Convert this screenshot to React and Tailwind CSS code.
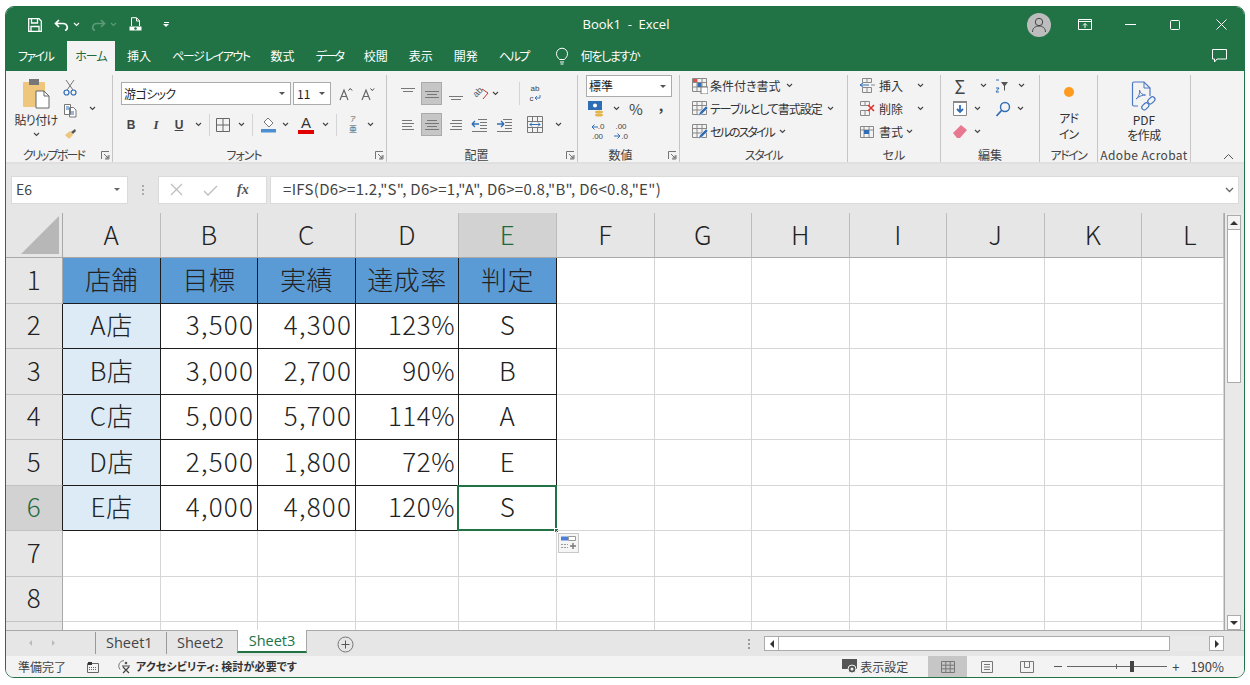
import { Fragment } from "react";

const cols = ["A", "B", "C", "D", "E", "F", "G", "H", "I", "J", "K", "L"];
const table = [
  ["店舗", "目標", "実績", "達成率", "判定"],
  ["A店", "3,500", "4,300", "123%", "S"],
  ["B店", "3,000", "2,700", "90%", "B"],
  ["C店", "5,000", "5,700", "114%", "A"],
  ["D店", "2,500", "1,800", "72%", "E"],
  ["E店", "4,000", "4,800", "120%", "S"],
];

function Ic({ w = 16, h = 16, children }) {
  return (
    <svg width={w} height={h} viewBox={`0 0 ${w} ${h}`} fill="none" className="shrink-0">
      {children}
    </svg>
  );
}

function Chev({ color = "#444" }) {
  return (
    <svg width="7" height="5" viewBox="0 0 7 5" fill="none" className="shrink-0">
      <path d="M1 1l2.5 2.5L6 1" stroke={color} strokeWidth="1.1" />
    </svg>
  );
}

function Launcher() {
  return (
    <svg width="9" height="9" viewBox="0 0 9 9" fill="none" className="shrink-0">
      <path d="M.5 8V.5H8M8 4v4H4M3 3l4 4M7 4.5V7H4.5" stroke="#666" strokeWidth=".9" />
    </svg>
  );
}

function Lines({ rows, y = 0 }) {
  return (
    <Ic w={16} h={16}>
      {rows.map((r, i) => (
        <path key={i} d={`M${r[0]} ${y + i * 3 + 0.5}H${r[1]}`} stroke="#777" />
      ))}
    </Ic>
  );
}

function Group({ width, label, launcher, children }) {
  return (
    <div className={`flex flex-col h-[87px] border-r border-[#c6c6c6] shrink-0 ${width}`}>
      <div className="h-[73px]">{children}</div>
      <div className="flex items-center h-[14px]">
        <div className="flex-1 text-center text-[12px] leading-none text-[#444] whitespace-nowrap">{label}</div>
        {launcher && (
          <div className="mr-[2px]">
            <Launcher />
          </div>
        )}
      </div>
    </div>
  );
}

function Clipboard() {
  return (
    <Group width="w-[107px]" label={<span className="tracking-[-1.8px]">クリップボード</span>} launcher>
      <div className="flex">
        <div className="flex flex-col items-center w-[52px] ml-[4px] pt-[4px]">
          <Ic w={29} h={30}>
            <rect x="1" y="3" width="22" height="25" rx="1" fill="#eec77c" />
            <rect x="7" y="0" width="10" height="6" fill="#777" />
            <path d="M14 12h8l5 5v12H14z" fill="#fff" stroke="#666" />
            <path d="M22 12v5h5" stroke="#666" />
          </Ic>
          <div className="text-[12px] leading-none mt-[5px] tracking-[-0.7px] text-[#333] whitespace-nowrap">貼り付け</div>
          <div className="mt-[6px]">
            <Chev />
          </div>
        </div>
        <div className="flex flex-col items-center w-[16px] pt-[1px]">
          <div className="h-[23px] flex items-center">
            <Ic w={14} h={17}>
              <path d="M3 1l7 10M11 1L4 11" stroke="#777" />
              <circle cx="3.5" cy="13.5" r="2.5" stroke="#2f6db5" strokeWidth="1.2" />
              <circle cx="10.5" cy="13.5" r="2.5" stroke="#2f6db5" strokeWidth="1.2" />
            </Ic>
          </div>
          <div className="h-[23px] flex items-center">
            <Ic w={15} h={15}>
              <path d="M1.5 1.5h6v10h-6zM6.5 4.5h4l2.500 2.500v7h-6.500z" fill="#fff" stroke="#777" />
              <path d="M3 4h3M3 6h3M8 9h3M8 11h3" stroke="#2f6db5" />
            </Ic>
          </div>
          <div className="h-[23px] flex items-center">
            <Ic w={15} h={15}>
              <path d="M2 9l5-4 3 4-4 4z" fill="#eec77c" />
              <path d="M8 6l4-3 1 2-3 3z" fill="#555" />
            </Ic>
          </div>
        </div>
        <div className="ml-[11px] pt-[31px]">
          <Chev />
        </div>
      </div>
    </Group>
  );
}

function Font() {
  return (
    <Group width="w-[274px]" label={<span className="tracking-[-1px]">フォント</span>} launcher>
      <div className="pl-[8px] pt-[7px]">
        <div className="flex items-center h-[23px]">
          <div className="flex items-center justify-between w-[170px] h-[23px] border border-[#ababab] bg-white px-[2px] pr-[5px] text-[12px] text-[#222]">
            <span className="tracking-[-0.6px]">游ゴシック</span>
            <span className="w-0 h-0 border-x-[3px] border-x-transparent border-t-[3px] border-t-[#555]" />
          </div>
          <div className="flex items-center justify-between w-[38px] h-[23px] ml-[2px] border border-[#ababab] bg-white px-[3px] pr-[5px] text-[12px] text-[#222]">
            <span>11</span>
            <span className="w-0 h-0 border-x-[3px] border-x-transparent border-t-[3px] border-t-[#555]" />
          </div>
          <div className="ml-[4px] w-[22px] flex justify-center">
            <Ic w={14} h={14}>
              <path d="M1 13L5 3l4 10M2.500 9.500h5" stroke="#666" strokeWidth="1.200" />
              <path d="M9.500 3.500l1.800-2 1.800 2" stroke="#444" />
            </Ic>
          </div>
          <div className="w-[22px] flex justify-center">
            <Ic w={14} h={14}>
              <path d="M1 13L5 3l4 10M2.500 9.500h5" stroke="#666" strokeWidth="1.200" />
              <path d="M9.500 1.500l1.800 2 1.800-2" stroke="#444" />
            </Ic>
          </div>
        </div>
        <div className="flex items-center h-[23px] mt-[8px] text-[#444]">
          <div className="w-[20px] text-center text-[12px] font-bold font-['Liberation_Sans',sans-serif]">B</div>
          <div className="w-[30px] text-center text-[13px] font-bold italic font-['Liberation_Serif',serif]">I</div>
          <div className="w-[16px] text-center text-[12px] font-bold underline font-['Liberation_Sans',sans-serif]">U</div>
          <div className="w-[22px] flex justify-center"><Chev /></div>
          <div className="w-[1px] h-[22px] bg-[#d4d4d4]" />
          <div className="w-[25px] flex justify-center">
            <Ic w={14} h={14}>
              <path d="M.5.500h13v13H.5zM7 1v12M1 7h12" stroke="#666" />
            </Ic>
          </div>
          <div className="w-[12px] flex justify-center"><Chev /></div>
          <div className="w-[10px] flex justify-center"><div className="w-[1px] h-[22px] bg-[#d4d4d4]" /></div>
          <div className="w-[22px] flex justify-center">
            <Ic w={16} h={16}>
              <path d="M8 1l5 5-4 4-5-5z" fill="#fff" stroke="#777" />
              <path d="M1 12h15v3.500H1z" fill="#4d8fd0" />
            </Ic>
          </div>
          <div className="w-[12px] flex justify-center"><Chev /></div>
          <div className="w-[30px] flex flex-col items-center">
            <span className="block text-[15px] leading-[13px] text-[#333] font-['Liberation_Sans',sans-serif]">A</span>
            <div className="w-[16px] h-[4px] bg-[#e00000] mt-[1px]" />
          </div>
          <div className="w-[8px] flex justify-center"><Chev /></div>
          <div className="w-[8px] flex justify-end"><div className="w-[1px] h-[22px] bg-[#d4d4d4]" /></div>
          <div className="w-[8px]" />
          <div className="w-[16px] flex flex-col items-center">
            <span className="block text-[6px] leading-[9px] text-[#555]">ア</span>
            <span className="block text-[8px] leading-[12px] text-[#555]">亜</span>
          </div>
          <div className="w-[18px] flex justify-center"><Chev /></div>
        </div>
      </div>
    </Group>
  );
}

function Alignment() {
  const active = "w-[21px] h-[23px] ml-[3px] bg-[#c6c6c6] border border-[#aaa] flex items-center justify-center";
  return (
    <Group width="w-[191px]" label="配置" launcher>
      <div className="pl-[10px] pt-[7px]">
        <div className="flex items-center h-[23px]">
          <div className="w-[21px] flex justify-center"><Lines rows={[[1, 15], [3, 13]]} y={2} /></div>
          <div className={active}><Lines rows={[[1, 15], [3, 13], [1, 15]]} y={5} /></div>
          <div className="w-[22px] ml-[3px] flex justify-center"><Lines rows={[[1, 15], [3, 13]]} y={10} /></div>
          <div className="flex items-center justify-center w-[20px] ml-[4px]">
            <span className="block -rotate-45 text-[9px] leading-none text-[#555] -mt-[3px] -mr-[3px] font-['Liberation_Sans',sans-serif]">ab</span>
            <Ic w={8} h={12}>
              <path d="M1 1l6 4-5 6" stroke="#c0392b" />
            </Ic>
          </div>
          <div className="w-[8px] flex justify-center"><Chev /></div>
          <div className="w-[21px] h-[23px] border-r border-[#d4d4d4]" />
          <div className="w-[30px] flex flex-col items-center text-[8px] text-[#444] font-['Liberation_Sans',sans-serif]">
            <span className="block leading-[9.500px]">ab</span>
            <span className="flex items-center leading-[9.500px]">
              c
              <Ic w={7} h={6}>
                <path d="M6 0v3H1M1 3l2-2M1 3l2 2" stroke="#2f6db5" strokeWidth=".9" />
              </Ic>
            </span>
          </div>
        </div>
        <div className="flex items-center h-[23px] mt-[8px]">
          <div className="w-[21px] flex justify-center"><Lines rows={[[2, 12], [2, 14], [2, 12], [2, 14]]} y={3} /></div>
          <div className={active}><Lines rows={[[3, 13], [1, 15], [3, 13], [1, 15]]} y={3} /></div>
          <div className="w-[22px] ml-[3px] flex justify-center"><Lines rows={[[4, 14], [2, 14], [4, 14], [2, 14]]} y={3} /></div>
          <div className="w-[22px] ml-[1px] flex justify-center">
            <Ic w={16} h={14}>
              <path d="M7 1.500h9M9 4.500h7M9 7.500h7M9 10.500h7M1 13.500h15" stroke="#777" />
              <path d="M1 6h7M1 6l3-3M1 6l3 3" stroke="#2f6db5" strokeWidth="1.400" />
            </Ic>
          </div>
          <div className="w-[22px] ml-[3px] flex justify-center">
            <Ic w={16} h={14}>
              <path d="M7 1.500h9M9 4.500h7M9 7.500h7M9 10.500h7M1 13.500h15" stroke="#777" />
              <path d="M1 6h7M8 6L5 3M8 6L5 9" stroke="#2f6db5" strokeWidth="1.400" />
            </Ic>
          </div>
          <div className="w-[7px]" />
          <div className="w-[26px] flex justify-center">
            <Ic w={16} h={17}>
              <path d="M.5.500h15v16H.5zM1 5.500h14M1 11.500h14M5.500 1v4M10.500 1v4M5.500 12v4M10.500 12v4" stroke="#777" />
              <path d="M3 8.500h10M3 8.500l2-2M3 8.500l2 2M13 8.500l-2-2M13 8.500l-2 2" stroke="#2f6db5" />
            </Ic>
          </div>
          <div className="w-[20px] flex justify-center"><Chev /></div>
        </div>
      </div>
    </Group>
  );
}

function DecimalArrow({ right }) {
  return (
    <Ic w={7} h={6}>
      {right ? (
        <path d="M0 3h6M6 3L3.500.500M6 3L3.500 5.500" stroke="#2f6db5" />
      ) : (
        <path d="M7 3H1M1 3l2.500-2.500M1 3l2.500 2.500" stroke="#2f6db5" />
      )}
    </Ic>
  );
}

function NumberGroup() {
  return (
    <Group width="w-[102px]" label={<span className="pr-[5px]">数値</span>} launcher>
      <div className="pl-[8px]">
        <div className="flex items-center justify-between w-[86px] h-[22px] border border-[#ababab] bg-white px-[2px] pr-[5px] text-[12px] text-[#222]">
          <span>標準</span>
          <span className="w-0 h-0 border-x-[3px] border-x-transparent border-t-[3px] border-t-[#555]" />
        </div>
        <div className="flex items-center h-[23px]">
          <div className="w-[20px] flex justify-center">
            <Ic w={16} h={16}>
              <rect x="0" y="0" width="14" height="9" fill="#2f6db5" />
              <circle cx="7" cy="4.500" r="2" fill="#fff" />
              <ellipse cx="11" cy="11" rx="4" ry="1.500" fill="#e3b54a" />
              <ellipse cx="11" cy="14" rx="4" ry="1.500" fill="#e3b54a" />
            </Ic>
          </div>
          <div className="w-[20px] flex justify-center"><Chev /></div>
          <div className="w-[20px] text-center text-[15px] leading-none text-[#444] pb-[1px]">%</div>
          <div className="w-[5px]" />
          <div className="w-[20px] text-center text-[14px] font-bold leading-none text-[#444] pb-[8px]">,</div>
        </div>
        <div className="flex items-center h-[23px] text-[8px] text-[#444] font-['Liberation_Sans',sans-serif]">
          <div className="flex flex-col items-center w-[23px]">
            <div className="flex items-center leading-[9.500px]"><DecimalArrow />.0</div>
            <div className="leading-[9.500px]">.00</div>
          </div>
          <div className="flex flex-col items-center w-[24px]">
            <div className="leading-[9.500px]">.00</div>
            <div className="flex items-center leading-[9.500px]"><DecimalArrow right />.0</div>
          </div>
        </div>
      </div>
    </Group>
  );
}

function Sheetlet({ kind }) {
  return (
    <Ic w={16} h={16}>
      <path d="M.5.500h14v13H.5zM1 4.500h13M1 9h13M5 1v12M10 1v12" stroke="#888" />
      {kind === "cond" && (
        <>
          <rect x="1" y="1" width="4" height="3" fill="#d9534f" />
          <rect x="5.500" y="5" width="4" height="4" fill="#2f6db5" />
          <rect x="9" y="9" width="7" height="7" fill="#fff" stroke="#777" />
        </>
      )}
      {kind !== "cond" && (
        <path d="M6 15l2-4 6-6 2 2-6 6z" fill="#2f6db5" stroke="#fff" strokeWidth=".5" />
      )}
    </Ic>
  );
}

function Styles() {
  return (
    <Group width="w-[168px]" label={<span className="tracking-[-1.5px]">スタイル</span>}>
      <div className="pl-[12px] text-[12px] text-[#333] -mt-px">
        <div className="flex items-center h-[23px] gap-[2px]">
          <Sheetlet kind="cond" />
          <span>条件付き書式</span>
          <span className="ml-[3px]"><Chev /></span>
        </div>
        <div className="flex items-center h-[23px] gap-[2px]">
          <Sheetlet kind="table" />
          <span className="tracking-[-1.05px]">テーブルとして書式設定</span>
          <span className="ml-[3px]"><Chev /></span>
        </div>
        <div className="flex items-center h-[23px] gap-[2px]">
          <Sheetlet kind="cell" />
          <span className="tracking-[-1.9px]">セルのスタイル</span>
          <span className="ml-[3px]"><Chev /></span>
        </div>
      </div>
    </Group>
  );
}

function CellsGroup() {
  return (
    <Group width="w-[93px]" label="セル">
      <div className="pl-[11px] text-[12px] text-[#333] -mt-px">
        <div className="flex items-center h-[23px]">
          <Ic w={16} h={15}>
            <path d="M3.500.500h9v4h-9zM3.500 9.500h9v5h-9zM8 1v4M8 10v4" stroke="#888" />
            <path d="M1 7h9M1 7l3-2M1 7l3 2" stroke="#2f6db5" />
            <path d="M12 7h4" stroke="#888" />
          </Ic>
          <span className="ml-[4px] w-[38px]">挿入</span>
          <Chev />
        </div>
        <div className="flex items-center h-[23px]">
          <Ic w={16} h={15}>
            <path d="M1.500.500h9v4h-9zM1.500 9.500h9v5h-9zM6 1v4M6 10v4" stroke="#888" />
            <path d="M9 4l6 6M15 4l-6 6" stroke="#d9342b" strokeWidth="1.600" />
          </Ic>
          <span className="ml-[4px] w-[38px]">削除</span>
          <Chev />
        </div>
        <div className="flex items-center h-[23px]">
          <Ic w={16} h={15}>
            <path d="M1.500 2.500h13v11h-13zM1 6h14M5 3v10M10 3v10" stroke="#888" />
            <rect x="5" y="6" width="5" height="4" fill="#2f6db5" />
          </Ic>
          <span className="ml-[4px] mr-[3px]">書式</span>
          <Chev />
        </div>
      </div>
    </Group>
  );
}

function Editing() {
  return (
    <Group width="w-[99px]" label="編集">
      <div className="pl-[12px] -mt-px">
        <div className="flex items-center h-[23px]">
          <div className="w-[14px] text-center text-[18px] leading-none text-[#444]">Σ</div>
          <div className="w-[26px] ml-[1px] flex justify-center pl-[5px]"><Chev /></div>
          <div className="w-[16px] flex justify-center">
            <Ic w={14} h={14}>
              <path d="M1 1h3M1 13h3M1 13l3-4H1" stroke="#2f6db5" />
              <path d="M6 3h7l-3 4v5l-1-1V7z" fill="#555" />
            </Ic>
          </div>
          <div className="w-[21px] flex justify-center pl-[2px]"><Chev /></div>
        </div>
        <div className="flex items-center h-[23px]">
          <Ic w={14} h={15}>
            <path d="M.5.500h13v14H.5z" stroke="#888" fill="#fff" />
            <path d="M0 0h14v2H0z" fill="#888" />
            <path d="M7 4v7M4 8l3 3 3-3" stroke="#2f6db5" strokeWidth="1.800" />
          </Ic>
          <div className="w-[18px] flex justify-center pl-[3px]"><Chev /></div>
          <div className="w-[28px] flex justify-center pl-[7px]">
            <Ic w={16} h={16}>
              <circle cx="10" cy="6" r="4.500" stroke="#2f6db5" strokeWidth="1.400" />
              <path d="M6.500 9.500L1.500 15" stroke="#2f6db5" strokeWidth="1.800" />
            </Ic>
          </div>
          <div className="w-[8px] ml-[3px] flex justify-center"><Chev /></div>
        </div>
        <div className="flex items-center h-[23px]">
          <Ic w={14} h={13}>
            <path d="M0 8l8-8 6 5-7 8H4z" fill="#e8788f" />
          </Ic>
          <div className="w-[18px] flex justify-center pl-[3px]"><Chev /></div>
        </div>
      </div>
    </Group>
  );
}

function Addin() {
  return (
    <Group width="w-[58px]" label={<span className="tracking-[-1.5px]">アドイン</span>}>
      <div className="flex flex-col items-center pt-[12px] text-[12px] text-[#333]">
        <div className="w-[10px] h-[10px] rounded-full bg-[#ff9a1f] mb-[13px]" />
        <span className="leading-[16px] tracking-[-1px]">アド</span>
        <span className="leading-[16px] tracking-[-1px]">イン</span>
      </div>
    </Group>
  );
}

function Adobe() {
  return (
    <Group width="w-[93px]" label={<span className="tracking-[0.4px]">Adobe Acrobat</span>}>
      <div className="flex flex-col items-center pt-[5px] text-[12px] text-[#333]">
        <Ic w={26} h={32}>
          <path d="M7 26H3a1.500 1.500 0 0 1-1.500-1.500v-21A1.500 1.500 0 0 1 3 2h10l6 6v8" stroke="#4a78c2" strokeWidth="1.200" />
          <path d="M13 2v6h6" stroke="#4a78c2" />
          <path d="M5 19c3-2 4-6 3.500-9 .5 3 3 5 6 5-3 0-6 1-9.500 4z" stroke="#4a78c2" />
          <rect x="10" y="24" width="8" height="5" rx="2.500" transform="rotate(-45 14 26)" stroke="#4a78c2" strokeWidth="1.200" />
          <rect x="16" y="18" width="8" height="5" rx="2.500" transform="rotate(-45 20 20)" stroke="#4a78c2" strokeWidth="1.200" />
        </Ic>
        <span className="leading-[15px]">PDF</span>
        <span className="leading-[15px] tracking-[-0.4px]">を作成</span>
      </div>
    </Group>
  );
}

function TitleBar() {
  return (
    <div className="flex items-center h-[34px] bg-[#217346] text-white shrink-0 pt-[1px]">
      <div className="flex items-center pl-[22px] w-[300px]">
        <Ic w={14} h={14}>
          <path d="M.7.700h10.300l2.300 2.300v10.300H.7zM3.500 1v4h6V1M3 13V8.500h8V13" stroke="#fff" strokeWidth="1.300" />
        </Ic>
        <div className="ml-[12px]">
          <Ic w={15} h={12}>
            <path d="M5 1L1.500 4.500 5 8M2 4.500h7c5 0 5.500 6 2 7" stroke="#fff" strokeWidth="1.700" />
          </Ic>
        </div>
        <div className="ml-[4px]"><Chev color="#fff" /></div>
        <div className="ml-[11px]">
          <Ic w={15} h={12}>
            <path d="M10 1l3.500 3.500L10 8M13 4.500H6c-5 0-5.500 6-2 7" stroke="#5c9a78" strokeWidth="1.700" />
          </Ic>
        </div>
        <div className="ml-[4px]"><Chev color="#5c9a78" /></div>
        <div className="ml-[12px]">
          <Ic w={13} h={15}>
            <path d="M2.500 9V.7h5l3 3V9M7.500 1v3h3" stroke="#fff" />
            <path d="M.5 9.500h12v4H.5z" fill="#fff" />
            <circle cx="6.500" cy="11.500" r="1.300" fill="#217346" />
          </Ic>
        </div>
        <div className="ml-[21px] flex flex-col items-center gap-[1px]">
          <div className="w-[5px] h-[1px] bg-white" />
          <div className="w-0 h-0 border-x-[3px] border-x-transparent border-t-[3px] border-t-white" />
        </div>
      </div>
      <div className="w-[640px] text-center text-[13px] whitespace-pre font-['Open_Sans',sans-serif]">Book1  -  Excel</div>
      <div className="ml-auto flex items-center pr-[17px]">
        <div className="w-[24px] h-[24px] rounded-full bg-[#bdbdbd] flex items-center justify-center">
          <Ic w={16} h={16}>
            <circle cx="8" cy="5" r="3.700" stroke="#444" />
            <path d="M1.500 15c0-4 3-6 6.500-6s6.500 2 6.500 6" stroke="#444" />
          </Ic>
        </div>
        <div className="ml-[27px]">
          <Ic w={14} h={11}>
            <path d="M.5.500h13v10H.5z" stroke="#fff" />
            <path d="M1 2.500h12" stroke="#fff" />
            <path d="M7 9V4.500M5 6.500l2-2 2 2" stroke="#fff" />
          </Ic>
        </div>
        <div className="ml-[33px] w-[11px] h-[1px] bg-white" />
        <div className="ml-[34px] w-[10px] h-[10px] rounded-[1.500px] border border-white" />
        <div className="ml-[36px]">
          <Ic w={11} h={11}>
            <path d="M.5.500l10 10M10.500.500l-10 10" stroke="#fff" />
          </Ic>
        </div>
      </div>
    </div>
  );
}

function TabBar() {
  return (
    <div className="flex h-[30px] bg-[#217346] text-white text-[12px] shrink-0">
      <div className="pl-[12px] w-[61px] flex items-center tracking-[-1.6px]">ファイル</div>
      <div className="w-[48px] bg-[#f3f3f3] text-[#1f6b41] flex items-center justify-center tracking-[-1px]">ホーム</div>
      <div className="flex items-center ml-[12px] gap-[21px]">
        <span>挿入</span>
        <span className="tracking-[-1.45px]">ページ レイアウト</span>
        <span>数式</span>
        <span className="tracking-[-2.1px]">データ</span>
        <span>校閲</span>
        <span>表示</span>
        <span>開発</span>
        <span className="tracking-[-1.5px]">ヘルプ</span>
      </div>
      <div className="flex items-center ml-[26px]">
        <Ic w={14} h={18}>
          <path d="M4.500 12.500C3 10.500 1.500 9.500 1.500 6.700a5.500 5.500 0 0 1 11 0c0 2.800-1.500 3.800-3 5.800zM5 15h4M5.500 17h3" stroke="#fff" />
        </Ic>
        <span className="ml-[12px] tracking-[-1.4px]">何をしますか</span>
      </div>
      <div className="ml-auto flex items-center pr-[17px]">
        <Ic w={15} h={14}>
          <path d="M.5.500h14v9.500H5L2.500 13v-3H.5z" stroke="#fff" />
        </Ic>
      </div>
    </div>
  );
}

function Ribbon() {
  return (
    <div className="flex h-[93px] pt-[4px] bg-[#f3f3f3] border-b-2 border-[#e0e0e0] shrink-0">
      <Clipboard />
      <Font />
      <Alignment />
      <NumberGroup />
      <Styles />
      <CellsGroup />
      <Editing />
      <Addin />
      <Adobe />
      <div className="ml-auto self-end pr-[10px] pb-[2px]">
        <Ic w={11} h={7}>
          <path d="M1 6l4.500-4.500L10 6" stroke="#555" />
        </Ic>
      </div>
    </div>
  );
}

function FormulaBar() {
  return (
    <div className="flex items-center h-[49px] pt-[2px] bg-[#e6e6e6] pl-[5px] pr-[5px] shrink-0">
      <div className="flex items-center justify-between w-[117px] h-[28px] bg-white border border-[#dadada] pl-[4px] pr-[7px] text-[14px] text-[#444]">
        <span>E6</span>
        <span className="w-0 h-0 border-x-[3px] border-x-transparent border-t-[3px] border-t-[#666]" />
      </div>
      <div className="w-[30px] flex flex-col items-center gap-[2px]">
        <div className="w-[2px] h-[2px] bg-[#aaa]" />
        <div className="w-[2px] h-[2px] bg-[#aaa]" />
        <div className="w-[2px] h-[2px] bg-[#aaa]" />
      </div>
      <div className="flex items-center w-[109px] h-[28px] bg-white border border-[#dadada]">
        <div className="ml-[11px]">
          <Ic w={13} h={13}>
            <path d="M1 1l11 11M12 1L1 12" stroke="#bdbdbd" strokeWidth="1.200" />
          </Ic>
        </div>
        <div className="ml-[20px]">
          <Ic w={15} h={12}>
            <path d="M1 7l4 4 9-9" stroke="#bdbdbd" strokeWidth="1.300" />
          </Ic>
        </div>
        <div className="ml-[19px] text-[14px] italic font-bold leading-none text-[#555] font-['Liberation_Serif',serif]">fx</div>
      </div>
      <div className="flex items-center justify-between flex-1 h-[28px] ml-[3px] bg-white border border-[#dadada] pl-[12px] pr-[4px] text-[#444]">
        <span className="text-[15px] tracking-[0.3px]">=IFS(D6&gt;=1.2,"S", D6&gt;=1,"A", D6&gt;=0.8,"B", D6&lt;0.8,"E")</span>
        <Ic w={9} h={6}>
          <path d="M1 1l3.500 3.500L8 1" stroke="#666" strokeWidth="1.300" />
        </Ic>
      </div>
    </div>
  );
}

function dataCellClass(r, c) {
  if (r > 5 || c > 4) return "";
  const fill = r === 0 ? "bg-[#5b9bd5]" : c === 0 ? "bg-[#ddebf7]" : "bg-white";
  return `${fill} border-r-[#1c1c1c] border-b-[#1c1c1c]`;
}

function Grid() {
  const rowNums = [1, 2, 3, 4, 5, 6, 7, 8, 9];
  return (
    <div className="flex-1 grid overflow-hidden grid-cols-[57px_98px_97px_98px_103px_98px_98px_97px_98px_97px_98px_97px_82px] grid-rows-[45px_45.5px_45.5px_45.5px_45.5px_45.5px_45.5px_45.5px_45.5px_9px] text-[26px] font-light tracking-[0.5px] text-[#222]">
      <div className="flex items-end justify-end bg-[#e6e6e6] border-r border-b border-[#a8a8a8] pr-[3px] pb-[3px]">
        <div className="w-0 h-0 border-l-[38px] border-l-transparent border-b-[38px] border-b-[#b7b7b7]" />
      </div>
      {cols.map((col, c) => (
        <div
          key={col}
          className={`flex items-center justify-center pb-[4px] border-r border-b border-b-[#a8a8a8] border-r-[#bcbcbc] ${
            c === 4 ? "bg-[#d2d2d2] text-[#1f6b41]" : "bg-[#e6e6e6]"
          } ${c === 11 ? "pl-[15px]" : ""}`}
        >
          {col}
        </div>
      ))}
      {rowNums.map((n, r) => (
        <Fragment key={n}>
          <div
            className={`flex items-center justify-center pb-[4px] border-b border-r border-b-[#c2c2c2] ${
              r < 6 && r > 0 ? "border-r-[#1c1c1c]" : "border-r-[#a8a8a8]"
            } ${r === 5 ? "bg-[#d2d2d2] text-[#1f6b41]" : "bg-[#e6e6e6]"}`}
          >
            {n < 9 ? n : ""}
          </div>
          {cols.map((col, c) => {
            const text = table[r] && table[r][c];
            const right = r > 0 && c >= 1 && c <= 3;
            return (
              <div
                key={col}
                className={`relative flex items-center pb-[4px] border-r border-b border-[#d6d6d6] ${
                  right ? "justify-end pr-[3px]" : "justify-center"
                } ${right && c < 3 ? "tracking-[1.2px]" : ""} ${dataCellClass(r, c)}`}
              >
                {text}
                {r === 5 && c === 4 && (
                  <>
                    <div className="absolute -left-[2px] -top-[1px] -right-px -bottom-px border-2 border-[#217346]" />
                    <div className="absolute -right-[3px] -bottom-[3px] w-[5px] h-[5px] bg-[#217346] border border-white" />
                    <div className="absolute left-[99px] top-[47px] flex items-center justify-center w-[21px] h-[20px] bg-[#f5f5f5] border border-[#c8c8c8]">
                      <Ic w={17} h={15}>
                        <path d="M1 1.500h7v4H1z" fill="#4d7fd6" />
                        <path d="M8.500 1.500h7v4h-7z" fill="#fff" stroke="#999" />
                        <path d="M1 9.500h7M1 12.500h7" stroke="#999" strokeDasharray="2 1" />
                        <path d="M10 11h6M13 8v6" stroke="#777" strokeWidth="1.400" />
                      </Ic>
                    </div>
                  </>
                )}
              </div>
            );
          })}
        </Fragment>
      ))}
    </div>
  );
}

function Arrow({ dir }) {
  const cls =
    dir === "up"
      ? "border-x-[4px] border-x-transparent border-b-[4px] border-b-[#333]"
      : dir === "down"
      ? "border-x-[4px] border-x-transparent border-t-[4px] border-t-[#333]"
      : dir === "left"
      ? "border-y-[4px] border-y-transparent border-r-[4px] border-r-[#333]"
      : "border-y-[4px] border-y-transparent border-l-[4px] border-l-[#333]";
  return <span className={`w-0 h-0 ${cls}`} />;
}

function VScroll() {
  return (
    <div className="flex flex-col w-[20px] pl-[2px] pr-[3px] pt-[2px] bg-[#e9e9e9] border-l border-[#a8a8a8]">
      <div className="flex items-center justify-center h-[15px] bg-[#f3f3f3] border border-[#ababab]">
        <Arrow dir="up" />
      </div>
      <div className="h-[153px] bg-white border-x border-b border-[#ababab]" />
      <div className="mt-auto flex items-center justify-center h-[15px] bg-white border border-[#ababab]">
        <Arrow dir="down" />
      </div>
    </div>
  );
}

function SheetTabs() {
  return (
    <div className="flex h-[26px] bg-[#e6e6e6] border-t border-[#a8a8a8] text-[14.500px] text-[#444] shrink-0 font-['Open_Sans',sans-serif]">
      <div className="flex items-center pl-[23px] w-[89px] gap-[20px] h-[23px]">
        <span className="w-0 h-0 border-y-[3px] border-y-transparent border-r-[3px] border-r-[#bbb]" />
        <span className="w-0 h-0 border-y-[3px] border-y-transparent border-l-[3px] border-l-[#bbb]" />
      </div>
      <div className="flex items-center h-[22px] w-[71px] mt-[1px] border-l border-[#999] pl-[10px]">Sheet1</div>
      <div className="flex items-center h-[22px] w-[71px] mt-[1px] border-l border-[#999] pl-[10px]">Sheet2</div>
      <div className="flex items-center justify-center w-[70px] h-[23px] -mt-px bg-white border-x border-[#a8a8a8] border-b-2 border-b-[#217346] text-[#217346]">
        Sheet3
      </div>
      <div className="flex items-center ml-[30px] h-[26px]">
        <Ic w={17} h={17}>
          <circle cx="8.500" cy="8.500" r="7.500" stroke="#777" />
          <path d="M8.500 4.500v8M4.500 8.500h8" stroke="#555" />
        </Ic>
      </div>
      <div className="flex flex-col items-center gap-[2px] justify-center ml-[393px] h-[25px] w-[3px]">
        <div className="w-[2px] h-[2px] bg-[#999]" />
        <div className="w-[2px] h-[2px] bg-[#999]" />
        <div className="w-[2px] h-[2px] bg-[#999]" />
      </div>
      <div className="flex items-center ml-[14px] h-[25px]">
        <div className="flex items-center justify-center w-[15px] h-[15px] bg-white border border-[#ababab]">
          <Arrow dir="left" />
        </div>
        <div className="w-[391px] h-[15px] bg-white border-y border-r border-[#ababab]" />
        <div className="w-[39px] h-[15px] bg-[#e9e9e9]" />
        <div className="flex items-center justify-center w-[15px] h-[15px] bg-white border border-[#ababab]">
          <Arrow dir="right" />
        </div>
      </div>
    </div>
  );
}

function StatusBar() {
  return (
    <div className="flex items-center h-[21px] bg-[#f3f3f3] text-[12px] text-[#444] shrink-0">
      <span className="ml-[12px]">準備完了</span>
      <div className="ml-[21px]">
        <Ic w={12} h={12}>
          <path d="M.5 2.500h11v9H.5z" stroke="#666" />
          <path d="M1 1h4v3H1z" fill="#333" />
          <path d="M2 6.500h8M2 8.500h8" stroke="#666" strokeDasharray="1 1" />
        </Ic>
      </div>
      <div className="ml-[18px]">
        <Ic w={16} h={15}>
          <path d="M7 1.500a5.500 5.500 0 0 0-4 9" stroke="#777" />
          <circle cx="9" cy="4" r="1.300" fill="#555" />
          <path d="M5 7h8M6 14l6-6M12 14L6 8" stroke="#444" strokeWidth="1.200" />
        </Ic>
      </div>
      <span className="ml-[3px] text-[11px] font-bold text-[#333] tracking-[0.1px]">アクセシビリティ: 検討が必要です</span>
      <div className="ml-auto flex items-center h-full pr-[20px]">
        <Ic w={16} h={15}>
          <path d="M0 0h15v10H0z" fill="#555" />
          <circle cx="10" cy="10" r="4" fill="#555" stroke="#f3f3f3" />
          <circle cx="10" cy="10" r="1.500" fill="#f3f3f3" />
        </Ic>
        <span className="ml-[2px] text-[12px] w-[68px]">表示設定</span>
        <div className="flex items-center justify-center w-[39px] h-full bg-[#c6c6c6]">
          <Ic w={14} h={12}>
            <path d="M.5.500h13v11H.5zM1 4.200h12M1 7.800h12M4.800 1v10M9.200 1v10" stroke="#777" />
          </Ic>
        </div>
        <div className="flex items-center justify-center w-[40px]">
          <Ic w={12} h={12}>
            <path d="M.5.500h11v11H.5zM3 3.500h6M3 6h6M3 8.500h6" stroke="#777" />
          </Ic>
        </div>
        <div className="flex items-center justify-center w-[40px]">
          <Ic w={14} h={12}>
            <path d="M.5.500h13v11H.5zM4.500 1v5.500h5V1" stroke="#777" />
          </Ic>
        </div>
        <div className="ml-[7px] w-[8px] h-[1px] bg-[#555]" />
        <div className="relative ml-[5px] w-[100px] h-[1px] bg-[#666]">
          <div className="absolute left-[49px] -top-[2px] w-[1px] h-[5px] bg-[#666]" />
          <div className="absolute left-[63px] -top-[5px] w-[4px] h-[11px] bg-[#444]" />
        </div>
        <div className="ml-[5px] text-[13px] leading-none">+</div>
        <span className="ml-[11px] text-[13px] leading-none">190%</span>
      </div>
    </div>
  );
}

export default function App() {
  return (
    <div className="w-[1250px] h-[685px] bg-white pt-[6px] pl-[5px] font-['Noto_Sans_CJK_JP',sans-serif] [font-feature-settings:'palt'] overflow-hidden">
      <div className="flex flex-col w-[1240px] h-[672px] rounded-[9px] overflow-hidden border border-[#217346]">
        <TitleBar />
        <TabBar />
        <Ribbon />
        <FormulaBar />
        <div className="flex h-[417px] shrink-0 bg-white">
          <Grid />
          <VScroll />
        </div>
        <SheetTabs />
        <StatusBar />
      </div>
    </div>
  );
}
